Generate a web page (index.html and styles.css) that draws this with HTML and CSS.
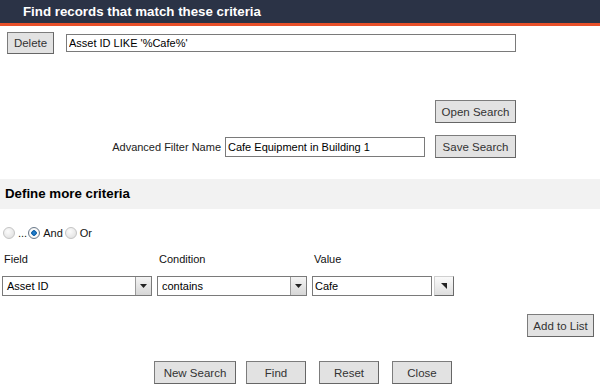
FILE: index.html
```html
<!DOCTYPE html>
<html lang="en">
<head>
	<meta charset="UTF-8">
	<title>Find records</title>
	<link rel="stylesheet" href="styles.css">
</head>
<body>
	<div class="page">
		<div class="titlebar">
			<h1>Find records that match these criteria</h1>
		</div>
		<div class="row clause">
			<button class="btn btn-delete">Delete</button>
			<input class="txt txt-clause" type="text" value="Asset ID LIKE '%Cafe%'">
		</div>
		<div class="row right open-row">
			<button class="btn btn-side">Open Search</button>
		</div>
		<div class="row right save-row">
			<label class="lbl">Advanced Filter Name</label>
			<input class="txt txt-name" type="text" value="Cafe Equipment in Building 1">
			<button class="btn btn-side">Save Search</button>
		</div>
		<div class="section">
			<h2>Define more criteria</h2>
		</div>
		<div class="row radios">
			<input class="rad" type="radio" name="op">
			<span class="rad-text">...</span>
			<input class="rad" type="radio" name="op" checked>
			<span class="rad-text">And</span>
			<input class="rad rad-or" type="radio" name="op">
			<span class="rad-text">Or</span>
		</div>
		<div class="criteria">
			<span class="col-head">Field</span>
			<span class="col-head">Condition</span>
			<span class="col-head">Value</span>
			<div class="sel">
				<span class="sel-text">Asset ID</span>
				<span class="sel-arrow">
					<svg width="8" height="5" viewBox="0 0 8 5"><path d="M0 0h7L3.5 4z" fill="#222"/></svg>
				</span>
			</div>
			<div class="sel">
				<span class="sel-text">contains</span>
				<span class="sel-arrow">
					<svg width="8" height="5" viewBox="0 0 8 5"><path d="M0 0h7L3.5 4z" fill="#222"/></svg>
				</span>
			</div>
			<div class="value">
				<input class="txt txt-value" type="text" value="Cafe">
				<span class="pick">
					<svg width="7" height="7" viewBox="0 0 7 7"><path d="M0 0h6v6z" fill="#222"/></svg>
				</span>
			</div>
		</div>
		<div class="row right add-row">
			<button class="btn btn-add">Add to List</button>
		</div>
		<div class="row actions">
			<button class="btn btn-new">New Search</button>
			<button class="btn btn-act">Find</button>
			<button class="btn btn-act">Reset</button>
			<button class="btn btn-act">Close</button>
		</div>
	</div>
</body>
</html>
```

FILE: styles.css
```css
*{
	margin: 0;
	padding: 0;
	box-sizing: border-box;
}
body,html{
	width: 100%;
	height: 100%;
	overflow: hidden;
	background: #fff;
}
body{
	font-family: "Liberation Sans", Arial, sans-serif;
	font-size: 11px;
	color: #000;
}
.page{
	width: 600px;
}
.titlebar{
	height: 26px;
	background: #2b3346;
	border-bottom: 3px solid #e8502a;
	padding-left: 23px;
}
.titlebar h1{
	color: #fff;
	font-size: 13.3px;
	font-weight: bold;
	line-height: 23px;
}
.row{
	display: flex;
	align-items: center;
}
.right{
	justify-content: flex-end;
}
.btn{
	font-family: "Liberation Sans", Arial, sans-serif;
	font-size: 11.5px;
	color: #333;
	height: 23px;
	padding: 0 2px;
	white-space: nowrap;
	background: #e2e2e2;
	border: 1px solid #7c7c7c;
	border-right-color: #666;
	border-bottom-color: #666;
}
.txt{
	font-family: "Liberation Sans", Arial, sans-serif;
	font-size: 11px;
	color: #000;
	border: 1px solid #7a7a7a;
	padding: 0 2px;
	background: #fff;
	outline: none;
}
.clause{
	margin-top: 6px;
	padding-left: 7px;
}
.btn-delete{
	width: 47px;
	height: 22px;
}
.txt-clause{
	width: 450px;
	height: 18px;
	margin-left: 12px;
}
.open-row{
	margin-top: 46px;
	padding-right: 84px;
}
.btn-side{
	width: 81px;
}
.save-row{
	margin-top: 12px;
	padding-right: 84px;
}
.lbl{
	color: #222;
	margin-right: 4px;
}
.txt-name{
	width: 200px;
	height: 20px;
	margin-right: 10px;
}
.section{
	margin-top: 21px;
	height: 30px;
	background: #f2f2f2;
	padding-left: 5px;
}
.section h2{
	font-size: 13.3px;
	font-weight: bold;
	line-height: 30px;
}
.radios{
	margin-top: 18px;
	padding-left: 3px;
	height: 12px;
}
.rad{
	appearance: none;
	width: 12px;
	height: 12px;
	border-radius: 50%;
	border: 1px solid #c4c4c4;
	background: radial-gradient(circle at 40% 35%, #fcfcfc, #dcdcdc);
}
.rad:checked{
	border-color: #6a7a8a;
	background: radial-gradient(circle, #2a8ad8 0, #0c5fa8 2.5px, #fff 3px, #e4e4e4 100%);
}
.rad-text{
	color: #111;
	margin: 0 1px 0 3px;
}
.rad-or{
	margin-left: 1px;
}
.criteria{
	display: grid;
	grid-template-columns: 150px 150px 142px;
	column-gap: 5px;
	row-gap: 10px;
	margin-top: 13px;
	padding-left: 2px;
}
.col-head{
	height: 14px;
	line-height: 14px;
	padding-left: 2px;
	color: #111;
}
.sel{
	display: flex;
	height: 20px;
	border: 1px solid #7a7a7a;
	background: #fff;
}
.sel-text{
	flex: 1;
	padding-left: 4px;
	line-height: 18px;
}
.sel-arrow{
	width: 16px;
	display: flex;
	align-items: center;
	justify-content: center;
	background: linear-gradient(#f4f4f4, #d6d6d6);
	border-left: 1px solid #9a9a9a;
}
.value{
	display: flex;
	gap: 2px;
	height: 20px;
}
.txt-value{
	width: 120px;
	height: 20px;
}
.pick{
	width: 20px;
	height: 20px;
	display: flex;
	align-items: center;
	justify-content: center;
	background: linear-gradient(#fafafa, #dedede);
	border: 1px solid #d0d0d0;
	border-right-color: #6a6a6a;
	border-bottom-color: #6a6a6a;
}
.add-row{
	margin-top: 18px;
	padding-right: 6px;
}
.btn-add{
	width: 67px;
}
.actions{
	margin-top: 24px;
	padding-left: 154px;
	gap: 10px;
}
.btn-new{
	width: 82px;
}
.btn-act{
	width: 60px;
}
.btn-act + .btn-act{
	margin-left: 3px;
}
```
